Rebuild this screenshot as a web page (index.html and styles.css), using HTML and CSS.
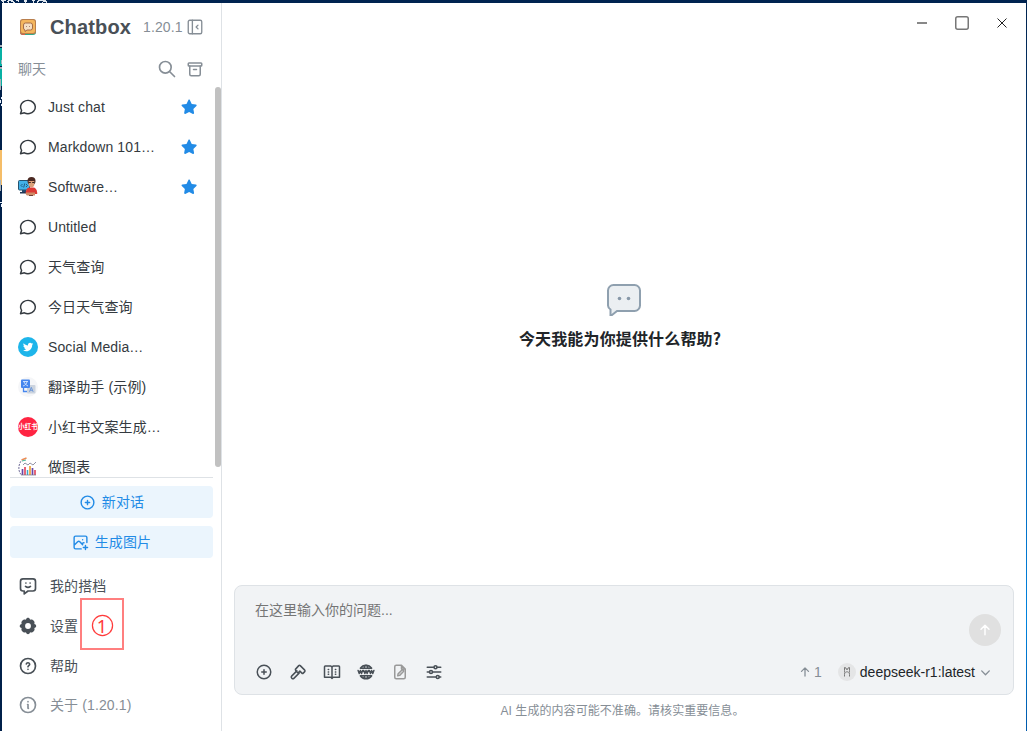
FILE: index.html
```html
<!DOCTYPE html>
<html lang="zh-CN">
<head>
  <meta charset="UTF-8" />
  <meta name="viewport" content="width=device-width, initial-scale=1.0"/>
  <title>Chatbox</title>
  <link rel="stylesheet" href="styles.css">
</head>
<body>

  <!-- Desktop showing behind the window -->
  <div class="desktop">
    <svg class="top-strip" viewBox="0 0 48 3"><path d="M1 .5h5M8 .5h5M16 .5h3M24 .5h3M32 .5h3M38 .5h8M2 1.500h2M7 1.500h2M11 1.500h3M18 1.500h1M24 1.500h3M33 1.500h1M37 1.500h2M43 1.500h4M3 2.500h1M8 2.500h1M13 2.500h2M25 2.500h1M33 2.500h1M37 2.500h1M42 2.500h1M46 2.500h1"/></svg>
    <svg class="left-strip" viewBox="0 0 2 731">
      <path d="M0 48h2v18H0zM0 69h2v17H0z" fill="#08b1a4"/>
      <path d="M0 150h2v35H0z" fill="#f5bd68"/>
      <path d="M0 45h2v2H0zM0 67h2v2H0zM1 60h1v4H1zM0 79h1v11H0zM0 180h1v11H0z" fill="#a9b3b9"/>
      <path d="M1 97h1v2H1zM0 100h1v3H0zM1 104h1v2H1zM0 202h2v1H0zM1 204h1v3H1z" fill="#e9f2ff"/>
    </svg>
  </div>

  <!-- Shared icons -->
  <svg class="defs">
    <symbol id="chat" viewBox="0 0 24 24"><path d="M3 20l1.3-3.9C2 12.7 2.900 8.300 6.400 5.800C9.900 3.400 14.900 3.600 18.100 6.400C21.300 9.200 21.700 13.700 19 16.900C16.300 20.100 11.400 21 7.700 19L3 20"/></symbol>
    <symbol id="star" viewBox="0 0 24 24"><path d="M8.243 7.340l-6.380.925c-1 .15-1.380 1.360-.67 2.050l4.620 4.500-1.090 6.350c-.16.970.87 1.720 1.750 1.260l5.700-3 5.700 3c.88.460 1.900-.29 1.740-1.260l-1.090-6.350 4.620-4.500c.7-.7.320-1.900-.66-2.050l-6.380-.93-2.860-5.780c-.44-.88-1.700-.88-2.130 0z"/></symbol>
    <symbol id="arrow-up" viewBox="0 0 24 24"><path d="M12 5v14M18 11l-6-6M6 11l6-6"/></symbol>
  </svg>

  <div class="window">

    <!-- Sidebar -->
    <aside class="sidebar">
      <div class="brand">
        <svg class="logo" viewBox="0 0 16 16">
          <path d="M0 4h16v9a3 3 0 0 1-3 3H3a3 3 0 0 1-3-3z" fill="#35a88a"/>
          <path d="M0 11h5v5H3a3 3 0 0 1-3-3z" fill="#d8604c"/>
          <rect x="0" y="0" width="16" height="15" rx="2.500" fill="#b97f4d"/>
          <rect x="1" y="1" width="14" height="13" rx="2" fill="#f4b65e"/>
          <path d="M5.500 4h5A2 2 0 0 1 12.500 6v3a2 2 0 0 1-2 2H7l-2 1.500V11a2 2 0 0 1-1.500-2V6a2 2 0 0 1 2-2z" fill="#f5dfc4" stroke="#a56d49"/>
          <path d="M6 7.500h1M9 7.500h1" stroke="#a98672"/>
        </svg>
        <h1>Chatbox</h1>
        <span class="version">1.20.1</span>
        <svg class="icon collapse" viewBox="0 0 24 24"><rect x="3" y="3" width="18" height="18" rx="2"/><path d="M8.500 3v18M16 9.500L13.500 12l2.500 2.500"/></svg>
      </div>

      <div class="list-head">
        <span class="zh">聊天</span>
        <svg class="icon" viewBox="0 0 24 24"><circle cx="10" cy="10" r="7"/><path d="M21 21l-6-6"/></svg>
        <svg class="icon archive" viewBox="0 0 24 24"><rect x="3" y="4" width="18" height="4" rx="1"/><path d="M5 8v11a2 2 0 0 0 2 2h10a2 2 0 0 0 2-2V8M10 12.500h4"/></svg>
      </div>

      <div class="chats">
        <a class="chat"><svg class="icon"><use href="#chat"/></svg><span>Just chat</span><svg class="star"><use href="#star"/></svg></a>
        <a class="chat"><svg class="icon"><use href="#chat"/></svg><span>Markdown 101…</span><svg class="star"><use href="#star"/></svg></a>
        <a class="chat">
          <svg class="avatar" viewBox="0 0 20 20">
            <path d="M4 13h4v3H4z" fill="#27466d"/><path d="M2 15h6v1.500H2z" fill="#203754"/>
            <rect x=".5" y="3.500" width="11" height="9.500" rx="1" fill="#43b2e8" stroke="#26536f"/>
            <path d="M4.500 7l-1.500 1.500L4.500 10M5.700 10.500l1-4M8 7l1.500 1.500L8 10" fill="none" stroke="#17476b" stroke-width=".8"/>
            <circle cx="13.500" cy="4" r="4" fill="#4b2922"/>
            <path d="M10.700 4h5.600v3.500a2.800 2.800 0 0 1-5.600 0z" fill="#dca078"/>
            <path d="M10.500 5.500h2.300M14.200 5.500h2.300" stroke="#342421"/>
            <path d="M7.500 16l1-3.500c.6-1.500 2-2 3.500-2h3c2.500 0 4 2 4.200 5V17h-11z" fill="#dd3a35"/>
            <path d="M8 15.500h9v3H9.500c-1.500 0-2-1.500-1.500-3" fill="#cf8b67"/>
            <path d="M11 18.500h4" stroke="#713e34"/>
          </svg>
          <span>Software…</span><svg class="star"><use href="#star"/></svg>
        </a>
        <a class="chat"><svg class="icon"><use href="#chat"/></svg><span>Untitled</span></a>
        <a class="chat"><svg class="icon"><use href="#chat"/></svg><span class="zh">天气查询</span></a>
        <a class="chat"><svg class="icon"><use href="#chat"/></svg><span class="zh">今日天气查询</span></a>
        <a class="chat">
          <svg class="avatar" viewBox="0 0 20 20"><circle cx="10" cy="10" r="10" fill="#1eb5ea"/><path d="M15.200 6.900c-.4.200-.8.300-1.200.3.400-.3.700-.7.900-1.200-.4.200-.9.400-1.300.5a2.100 2.100 0 0 0-3.600 1.900c-1.700-.1-3.300-.9-4.300-2.200-.6 1-.3 2.200.6 2.800-.3 0-.6-.1-.9-.3 0 1 .7 1.900 1.700 2.100-.3.100-.6.100-.9 0 .3.800 1 1.400 1.900 1.500-.9.700-2 1-3.100.9 4.400 2.600 9.200-.3 9.200-5.300.4-.3.700-.6 1-1" fill="#fff"/></svg>
          <span>Social Media…</span>
        </a>
        <a class="chat">
          <svg class="avatar" viewBox="0 0 20 20"><circle cx="10" cy="10" r="10" fill="#f5f6f8"/><rect x="9" y="8" width="8.500" height="8.500" rx="1" fill="#cbd3de"/><rect x="3" y="2.500" width="9" height="8.500" rx="1" fill="#4586ee"/><path d="M5 4.500h5M9 4.500c0 2-2 4-4 4.500M6 5c1 2 2 3 4 4" fill="none" stroke="#d8e8ff" stroke-width=".9"/><path d="M5.500 11v3.500H9" fill="none" stroke="#4586ee" stroke-width="1.300"/><path d="M11.500 14.800l1.800-4.500 1.800 4.500M12 13.300h2.600" fill="none" stroke="#6d98d9"/></svg>
          <span class="zh">翻译助手 (示例)</span>
        </a>
        <a class="chat"><b class="avatar red">小红书</b><span class="zh">小红书文案生成…</span></a>
        <a class="chat">
          <svg class="avatar" viewBox="0 0 20 20" fill="none"><path d="M3 17.500C0 14 .3 8 3 4" stroke="#716d98" stroke-dasharray="2 1"/><path d="M3.500 3l5-2" stroke="#ed8b55" stroke-width="1.500"/><path d="M4 4l4-1" stroke="#45ba99"/><path d="M5 8l2-2 3 2 2-2 3 2 3-3" stroke="#77778f" stroke-width=".8"/><path d="M4.500 12v6M14.500 11v7" stroke="#6947a8" stroke-width="1.700"/><path d="M7 10v8M17 13v5" stroke="#e34c62" stroke-width="1.700"/><path d="M9.500 13v5" stroke="#38a9ce" stroke-width="1.500"/><path d="M12 9v9" stroke="#f1a13a" stroke-width="1.700"/><path d="M3 18h15" stroke="#777789" stroke-width=".7"/></svg>
          <span class="zh">做图表</span>
        </a>
        <div class="scrollbar"></div>
      </div>

      <div class="actions">
        <a class="action"><svg class="icon" viewBox="0 0 24 24"><circle cx="12" cy="12" r="9"/><path d="M9 12h6M12 9v6"/></svg><span class="zh">新对话</span></a>
        <a class="action"><svg class="icon" viewBox="0 0 24 24"><path d="M13 21H5a2 2 0 0 1-2-2V5a2 2 0 0 1 2-2h14a2 2 0 0 1 2 2v7M3 16l5-5c1-1 2-1 3 0l4 4M14 14l1-1c.7-.7 1.300-.9 2-.6M15 8h.01M16 19h6M19 16v6"/></svg><span class="zh">生成图片</span></a>
      </div>

      <nav class="menu">
        <a><svg class="icon" viewBox="0 0 24 24"><path d="M18 3.500H6a3 3 0 0 0-3 3V15a3 3 0 0 0 3 3h1.500v3.500L12 18h6a3 3 0 0 0 3-3V6.500a3 3 0 0 0-3-3M9.500 8.500h.01M14.500 8.500h.01M9 12.500c2 1.600 4 1.600 6 0"/></svg><span class="zh">我的搭档</span></a>
        <a><svg class="icon gear" viewBox="0 0 24 24"><path fill-rule="evenodd" d="M9.500 4.500C10.300 1.300 13.700 1.300 14.500 4.500C17.300 2.800 21.200 6.700 19.500 9.500C22.700 10.300 22.700 13.700 19.500 14.500C21.200 17.300 17.300 21.200 14.500 19.500C13.700 22.700 10.300 22.700 9.500 19.500C6.700 21.200 2.800 17.300 4.500 14.500C1.300 13.700 1.300 10.300 4.500 9.500C2.800 6.700 6.700 2.800 9.500 4.500M12 8.500a3.500 3.500 0 1 0 0 7 3.500 3.500 0 0 0 0-7"/></svg><span class="zh">设置</span></a>
        <a><svg class="icon" viewBox="0 0 24 24"><circle cx="12" cy="12" r="9"/><path d="M12 16v.01M12 13c0-1.300 2-1.500 2-3.200 0-2.200-3.600-2.300-4-.3"/></svg><span class="zh">帮助</span></a>
        <a class="about"><svg class="icon" viewBox="0 0 24 24"><circle cx="12" cy="12" r="9"/><path d="M12 8h.01M11.500 11.500h.5V16h.5"/></svg><span class="zh">关于 (1.20.1)</span></a>
        <div class="marker"><svg viewBox="0 0 24 24"><circle cx="12" cy="12" r="10.500"/></svg><span>1</span></div>
      </nav>
    </aside>

    <!-- Conversation -->
    <main class="main">
      <div class="controls">
        <svg viewBox="0 0 16 16"><path d="M3 8h10" stroke="#888" stroke-width="2"/></svg>
        <svg viewBox="0 0 16 16"><rect x="1.750" y="1.750" width="12.500" height="12.500" rx="2" stroke="#777" stroke-width="1.500"/></svg>
        <svg viewBox="0 0 16 16"><path d="M3.500 3.500l9 9M12.500 3.500l-9 9" stroke="#222"/></svg>
      </div>

      <div class="welcome">
        <svg viewBox="0 0 34 32"><path d="M6.500 1h21a5.500 5.500 0 0 1 5.500 5.500v15a5.500 5.500 0 0 1-5.500 5.500H10l-5 4h-1.500v-5.500C2 24.500 1 23 1 21.500v-15A5.500 5.500 0 0 1 6.500 1z" fill="#ebeff2" stroke="#8fa0af" stroke-width="2"/><circle cx="12.500" cy="14.500" r="1.800" fill="#8798a8"/><circle cx="21.500" cy="14.500" r="1.800" fill="#8798a8"/></svg>
        <h2>今天我能为你提供什么帮助?</h2>
      </div>

      <div class="composer">
        <div class="entry">
          <span class="placeholder">在这里输入你的问题...</span>
          <span class="send"><svg class="icon"><use href="#arrow-up"/></svg></span>
        </div>
        <div class="toolbar">
          <svg class="icon" viewBox="0 0 24 24"><circle cx="12" cy="12" r="9"/><path d="M9 12h6M12 9v6"/></svg>
          <svg class="icon" viewBox="0 0 24 24"><path d="M10.500 10.500l-7 7a1.800 1.800 0 0 0 0 2.500l.5.500a1.800 1.800 0 0 0 2.500 0l7-7M8.500 8.500l4.500-5c.6-.6 1.300-.6 2 0l6 6c.6.700.6 1.300 0 2l-2 2c-.6.600-1.200.6-1.800 0l-2.700-2.700-2.500 2.500-3-3z"/></svg>
          <svg class="icon" viewBox="0 0 24 24"><path d="M3 4h7.500L12 5.500 13.500 4H21a1 1 0 0 1 1 1v14h-8.500L12 20.500 10.500 19H2V5a1 1 0 0 1 1-1M12 5.500v15M7 8.500h.5M7 12h.5M7 15h.5M16.500 8.500h.5M16.500 12h.5M16.500 15h.5"/></svg>
          <svg class="icon" viewBox="0 0 24 24"><path d="M19.500 7a9 9 0 0 0-15 0M19.500 17a9 9 0 0 1-15 0M11.500 3c-1 1.200-1.800 2.600-2.200 4M12.500 3c1 1.200 1.800 2.600 2.200 4M11.500 21c-1-1.200-1.800-2.600-2.200-4M12.500 21c1-1.200 1.800-2.600 2.200-4M4.500 7h15M4.500 17h15M1.500 10l1.500 4 1.500-4 1.500 4L7.500 10M9 10l1.500 4 1.500-4 1.500 4 1.500-4M16.500 10l1.500 4 1.500-4 1.500 4 1.500-4"/></svg>
          <svg class="icon muted" viewBox="0 0 24 24"><path d="M14 3v5h5M14 3H7a2 2 0 0 0-2 2v14a2 2 0 0 0 2 2h10a2 2 0 0 0 2-2V8zM9 17l.5-2.500 4.800-4.800a1.400 1.400 0 0 1 2 2L11.500 16.500z"/></svg>
          <svg class="icon" viewBox="0 0 24 24"><circle cx="14" cy="5.500" r="2"/><circle cx="8" cy="12" r="2"/><circle cx="17" cy="18.500" r="2"/><path d="M3 5.500h9M16 5.500h5M3 12h3M10 12h11M3 18.500h12M19 18.500h2"/></svg>
          <span class="tokens"><svg class="icon"><use href="#arrow-up"/></svg>1</span>
          <span class="model">
            <svg class="model-logo" viewBox="0 0 18 18"><circle cx="9" cy="9" r="9" fill="#e4e5e6"/><path d="M6.500 13.500v-2l.3-2-.3-2V4.500l1.500.5.5 1.500h1L10 5l1.500-.5v3l-.3 2 .3 2v2M7.500 9.500c1-1 2-1 3 0" fill="none" stroke="#777"/></svg>
            deepseek-r1:latest
            <svg class="icon chevron" viewBox="0 0 24 24"><path d="M5 9l7 7 7-7"/></svg>
          </span>
        </div>
      </div>
      <p class="notice">AI 生成的内容可能不准确。请核实重要信息。</p>
    </main>
  </div>

</body>
</html>
```

FILE: styles.css
```css
* {
  box-sizing: border-box;
}

body {
  margin: 0;
  height: 731px;
  padding: 3px 1px 0 2px;
  overflow: hidden;
  background: linear-gradient(90deg, #00204a 50%, transparent 50%), linear-gradient(#00234e, #0759a8 50%, #0083df 85%, #0059aa);
  font-family: "Liberation Sans", "Noto Sans CJK SC", sans-serif;
  font-size: 14px;
  color: #212529;
}

.defs {
  position: absolute;
  width: 0;
  height: 0;
}

.desktop {
  position: absolute;
  top: 0;
  left: 0;
  width: 1027px;
  height: 731px;
  overflow: hidden;
}

.desktop::before {
  content: "";
  position: absolute;
  width: 1027px;
  height: 3px;
  background: #002350;
}

.top-strip {
  position: absolute;
  left: 0;
  top: 0;
  width: 48px;
  height: 3px;
  stroke: #dfe7ef;
}

.left-strip {
  position: absolute;
  left: 0;
  top: 0;
  width: 2px;
  height: 731px;
}

.window {
  position: relative;
  display: flex;
  height: 728px;
  background: #fff;
}

.icon {
  width: 20px;
  height: 20px;
  flex: none;
  fill: none;
  stroke: currentColor;
  stroke-width: 1.8;
  stroke-linecap: round;
  stroke-linejoin: round;
}

.zh {
  padding-bottom: 2px;
  letter-spacing: 0.12px;
}

/* Sidebar */
.sidebar {
  display: flex;
  flex-direction: column;
  width: 220px;
  flex: none;
  border-right: 1px solid #dee2e6;
}

.brand {
  display: flex;
  align-items: center;
  height: 48px;
  padding: 0 17px 0 18px;
  color: #868e96;
}

.logo {
  width: 16px;
  height: 16px;
}

.brand h1 {
  margin: 0 0 0 14px;
  font-size: 20px;
  letter-spacing: 0.15px;
  color: #495057;
}

.version {
  margin-left: 12px;
  letter-spacing: 0.1px;
}

.collapse,
.archive {
  width: 18px;
  height: 18px;
  margin-left: auto;
}

.list-head {
  display: flex;
  align-items: center;
  height: 36px;
  padding: 0 17px 0 16px;
  color: #868e96;
}

.list-head span {
  margin-right: auto;
}

.list-head .icon {
  stroke-width: 2;
}

.list-head .archive {
  margin-left: 9px;
}

.chats {
  position: relative;
  height: 390px;
  flex: none;
  overflow: hidden;
}

.chat {
  display: flex;
  align-items: center;
  height: 40px;
  padding: 0 24px 0 16px;
  letter-spacing: 0.1px;
  color: #343a40;
}

.chat span {
  margin-left: 10px;
  white-space: nowrap;
}

.star {
  width: 16px;
  height: 16px;
  margin-left: auto;
  fill: #228be6;
}

.avatar {
  width: 20px;
  height: 20px;
  flex: none;
}

.red {
  border-radius: 50%;
  background: #ff2442;
  color: #fff;
  font-size: 6.5px;
  letter-spacing: 0;
  line-height: 20px;
  text-align: center;
  white-space: nowrap;
}

.scrollbar {
  position: absolute;
  top: 0;
  right: 0;
  width: 6px;
  height: 380px;
  border-radius: 3px;
  background: #c1c1c1;
}

.actions {
  display: flex;
  flex-direction: column;
  gap: 8px;
  margin: 0 8px;
  padding-top: 8px;
  border-top: 1px solid #dee2e6;
}

.action {
  display: flex;
  align-items: center;
  justify-content: center;
  gap: 6px;
  height: 32px;
  border-radius: 4px;
  background: #ebf5fd;
  color: #228be6;
}

.action .icon {
  width: 17px;
  height: 17px;
  stroke-width: 2;
}

.menu {
  position: relative;
  padding-top: 8px;
}

.menu a {
  display: flex;
  align-items: center;
  gap: 12px;
  height: 40px;
  padding-left: 16px;
  color: #495057;
}

.menu .icon {
  stroke-width: 2;
}

.menu .about {
  height: 38px;
  color: #868e96;
}

.menu .gear {
  fill: currentColor;
  stroke: none;
}

.marker {
  position: absolute;
  left: 78px;
  top: 40px;
  display: grid;
  place-items: center;
  width: 44px;
  height: 52px;
  padding-top: 3px;
  border: 2px solid #ff7f7f;
  color: #ff3b3b;
  font: 18px/24px "Noto Sans", sans-serif;
}

.marker svg,
.marker span {
  grid-area: 1 / 1;
}

.marker svg {
  width: 23px;
  height: 23px;
  fill: none;
  stroke: currentColor;
  stroke-width: 1.3;
}

/* Conversation */
.main {
  display: flex;
  flex-direction: column;
  flex: 1;
  padding: 0 12px;
}

.controls {
  display: flex;
  justify-content: flex-end;
  gap: 24px;
  height: 40px;
  padding: 12px 4px 0 0;
}

.controls svg {
  width: 16px;
  height: 16px;
  fill: none;
}

.welcome {
  display: flex;
  flex-direction: column;
  align-items: center;
  height: 542px;
  padding-top: 241px;
  padding-right: 8px;
}

.welcome svg {
  width: 34px;
  height: 32px;
  margin-left: 8px;
}

.welcome h2 {
  margin: 10px 0 0;
  font-family: "Noto Sans CJK SC", sans-serif;
  font-size: 16px;
  line-height: 24px;
  letter-spacing: 0.15px;
  color: #212529;
}

.composer {
  height: 110px;
  border: 1px solid #dee2e6;
  border-radius: 8px;
  background: #f1f3f5;
}

.entry {
  display: flex;
  justify-content: space-between;
  height: 66px;
  padding: 14px 12px 0 20px;
}

.placeholder {
  line-height: 20px;
  color: #757575;
}

.send {
  display: grid;
  place-items: center;
  width: 32px;
  height: 32px;
  margin-top: 14px;
  border-radius: 50%;
  background: #e0e0e0;
  color: #fff;
}

.send .icon {
  width: 16px;
  height: 16px;
  stroke-width: 2.2;
}

.toolbar {
  display: flex;
  align-items: center;
  gap: 16px;
  height: 40px;
  padding: 0 21px 0 20px;
  color: #495057;
}

.toolbar > .icon {
  width: 18px;
  height: 18px;
  stroke-width: 2;
}

.toolbar .muted {
  color: #999;
}

.tokens {
  display: flex;
  align-items: center;
  gap: 2px;
  margin-left: auto;
  color: #868e96;
}

.tokens .icon {
  width: 14px;
  height: 14px;
  stroke-width: 2.2;
}

.model {
  display: flex;
  align-items: center;
  gap: 4px;
  color: #212529;
}

.model-logo {
  width: 18px;
  height: 18px;
}

.model .chevron {
  width: 13px;
  height: 13px;
  stroke-width: 2.5;
  color: #868e96;
}

.notice {
  margin: 7px 0 0;
  padding-right: 3px;
  font-size: 12px;
  line-height: 18px;
  letter-spacing: 0.06px;
  text-align: center;
  color: #868e96;
}
```
